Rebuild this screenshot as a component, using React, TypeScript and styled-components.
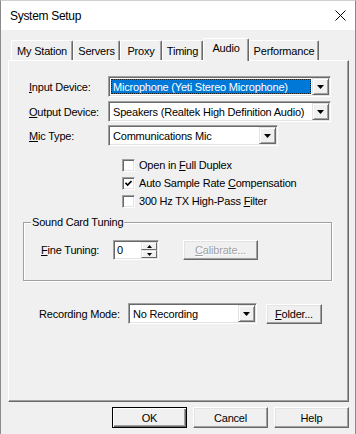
import React from 'react';
import styled, { createGlobalStyle } from 'styled-components';

const Global = createGlobalStyle`
  html, body { margin: 0; padding: 0; background: #f0f0f0; }
  body {
    font-family: "Liberation Sans", Arial, sans-serif;
    font-size: 11px;
    letter-spacing: -0.2px;
    color: #000;
  }
  * { box-sizing: border-box; }
`;

const Window = styled.div`
  width: 356px;
  height: 434px;
  background: #f0f0f0;
  border-left: 1px solid #8a8a8a;
  border-top: 1px solid #cfcfcf;
  border-right: 1px solid #8a8a8a;
  display: flex;
  flex-direction: column;
  overflow: hidden;
`;

const TitleBar = styled.div`
  height: 29px;
  flex-shrink: 0;
  background: #fff;
  display: flex;
  align-items: center;
  justify-content: space-between;
  padding: 0 9px 0 9px;
`;

const Title = styled.span`
  font-size: 12px;
  letter-spacing: -0.3px;
  margin-top: 1px;
`;

const CloseIcon = () => (
  <svg width="11" height="11" viewBox="0 0 11 11">
    <path d="M0.5 0.5 L10.5 10.5 M10.5 0.5 L0.5 10.5" stroke="#000" strokeWidth="1" fill="none" />
  </svg>
);

const Body = styled.div`
  flex: 1;
  display: flex;
  flex-direction: column;
  padding: 8px 6px 0 7px;
`;

const TabStrip = styled.div`
  display: flex;
  align-items: flex-end;
  height: 22px;
  padding-left: 3px;
`;

const Tab = styled.div<{ $w: number; $active?: boolean }>`
  width: ${p => p.$w}px;
  height: ${p => (p.$active ? 23 : 20)}px;
  margin-bottom: ${p => (p.$active ? -1 : 0)}px;
  position: relative;
  z-index: ${p => (p.$active ? 1 : 0)};
  background: #f0f0f0;
  border-top: 1px solid #fff;
  border-left: 1px solid #fff;
  border-right: 1px solid #696969;
  box-shadow: inset -1px 0 #a0a0a0;
  border-radius: 2px 2px 0 0;
  display: flex;
  align-items: center;
  justify-content: center;
  padding-bottom: ${p => (p.$active ? 4 : 0)}px;
`;

const Panel = styled.div`
  height: 342px;
  border-top: 1px solid #fff;
  border-left: 1px solid #fff;
  border-right: 1px solid #696969;
  border-bottom: 1px solid #696969;
  box-shadow: inset -1px -1px #a0a0a0;
  padding-top: 15px;
  display: flex;
  flex-direction: column;
`;

const FieldRow = styled.div<{ $mt?: number; $ml?: number }>`
  display: flex;
  align-items: center;
  height: 21px;
  margin-top: ${p => p.$mt ?? 0}px;
  margin-left: ${p => p.$ml ?? 20}px;
`;

const FieldLabel = styled.span<{ $w: number }>`
  width: ${p => p.$w}px;
  flex-shrink: 0;
`;

const U = styled.span`
  text-decoration: underline;
  text-underline-offset: 1px;
`;

const Combo = styled.div<{ $w: number }>`
  width: ${p => p.$w}px;
  height: 21px;
  background: #fff;
  border: 1px solid;
  border-color: #a0a0a0 #fff #fff #a0a0a0;
  box-shadow: inset 1px 1px #696969, inset -1px -1px #e3e3e3;
  display: flex;
  align-items: stretch;
  padding: 1px;
`;

const ComboValue = styled.div<{ $selected?: boolean }>`
  flex: 1;
  display: flex;
  align-items: center;
  padding: 0 1px;
  margin: 1px;
  white-space: nowrap;
  overflow: hidden;
  background: ${p => (p.$selected ? '#0078d7' : 'transparent')};
  color: ${p => (p.$selected ? '#fff' : '#000')};
  border: 1px dotted ${p => (p.$selected ? '#202020' : 'transparent')};
`;

const ArrowButton = styled.div`
  width: 17px;
  flex-shrink: 0;
  background: #f0f0f0;
  border: 1px solid;
  border-color: #e3e3e3 #696969 #696969 #e3e3e3;
  box-shadow: inset 1px 1px #fff, inset -1px -1px #a0a0a0;
  display: flex;
  align-items: center;
  justify-content: center;
`;

const DownArrow = () => (
  <svg width="7" height="4" viewBox="0 0 7 4">
    <path d="M0 0 H7 L3.5 4 Z" fill="#000" />
  </svg>
);

const ComboBox = ({ w, value, selected }: { w: number; value: string; selected?: boolean }) => (
  <Combo $w={w}>
    <ComboValue $selected={selected}>{value}</ComboValue>
    <ArrowButton>
      <DownArrow />
    </ArrowButton>
  </Combo>
);

const CheckList = styled.div`
  display: flex;
  flex-direction: column;
  margin: 10px 0 0 113px;
`;

const CheckRow = styled.div`
  display: flex;
  align-items: center;
  height: 18px;
  gap: 4px;
`;

const Box = styled.span`
  width: 13px;
  height: 13px;
  flex-shrink: 0;
  background: #fff;
  border: 1px solid;
  border-color: #a0a0a0 #fff #fff #a0a0a0;
  box-shadow: inset 1px 1px #696969, inset -1px -1px #e3e3e3;
  display: flex;
  align-items: center;
  justify-content: center;
`;

const CheckMark = () => (
  <svg width="7" height="7" viewBox="0 0 7 7">
    <path d="M0.5 2.8 L2.6 5 L6.5 1" stroke="#000" strokeWidth="1.6" fill="none" />
  </svg>
);

const CheckBox = ({ checked, children }: { checked?: boolean; children: React.ReactNode }) => (
  <CheckRow>
    <Box>{checked && <CheckMark />}</Box>
    <span>{children}</span>
  </CheckRow>
);

const Group = styled.fieldset`
  margin: 6px 0 0 14px;
  width: 309px;
  min-width: 0;
  border: 1px solid #a0a0a0;
  box-shadow: 1px 1px 0 #fff, inset 1px 1px #fff;
  padding: 0 0 20px 0;
`;

const Legend = styled.legend`
  margin-left: 7px;
  padding: 0 1px;
  line-height: 13px;
  background: #f0f0f0;
`;

const TuneRow = styled.div`
  display: flex;
  align-items: center;
  height: 20px;
  margin: 11px 0 0 17px;
`;

const Spin = styled.div`
  width: 46px;
  height: 20px;
  background: #fff;
  border: 1px solid;
  border-color: #a0a0a0 #fff #fff #a0a0a0;
  box-shadow: inset 1px 1px #696969, inset -1px -1px #e3e3e3;
  display: flex;
  padding: 1px;
`;

const SpinValue = styled.div`
  flex: 1;
  display: flex;
  align-items: center;
  padding-left: 2px;
`;

const SpinButtons = styled.div`
  width: 16px;
  display: flex;
  flex-direction: column;
`;

const SpinButton = styled.div`
  flex: 1;
  background: #f0f0f0;
  border: 1px solid;
  border-color: #e3e3e3 #696969 #696969 #e3e3e3;
  box-shadow: inset 1px 1px #fff;
  display: flex;
  align-items: center;
  justify-content: center;
`;

const TinyArrow = ({ up }: { up?: boolean }) => (
  <svg width="5" height="3" viewBox="0 0 5 3">
    <path d={up ? 'M0 3 H5 L2.5 0 Z' : 'M0 0 H5 L2.5 3 Z'} fill="#000" />
  </svg>
);

const PushButton = styled.div<{ $w: number; $h?: number; $default?: boolean; $disabled?: boolean; $ml?: number }>`
  width: ${p => p.$w}px;
  height: ${p => p.$h ?? 20}px;
  margin-left: ${p => p.$ml ?? 0}px;
  flex-shrink: 0;
  background: #f0f0f0;
  border: 1px solid;
  border-color: ${p => (p.$default ? '#000' : '#fff #696969 #696969 #fff')};
  box-shadow: ${p =>
    p.$default
      ? 'inset 1px 1px #fff, inset -1px -1px #696969, inset -2px -2px #a0a0a0'
      : 'inset -1px -1px #a0a0a0, inset 1px 1px #e3e3e3'};
  display: flex;
  align-items: center;
  justify-content: center;
  color: ${p => (p.$disabled ? '#a0a0a0' : '#000')};
  text-shadow: ${p => (p.$disabled ? '1px 1px 0 #fff' : 'none')};
`;

const Footer = styled.div`
  display: flex;
  justify-content: flex-end;
  gap: 6px;
  margin-top: 5px;
`;

export default function App() {
  return (
    <>
      <Global />
      <Window>
        <TitleBar>
          <Title>System Setup</Title>
          <CloseIcon />
        </TitleBar>
        <Body>
          <TabStrip>
            <Tab $w={62}>My Station</Tab>
            <Tab $w={47}>Servers</Tab>
            <Tab $w={42}>Proxy</Tab>
            <Tab $w={41}>Timing</Tab>
            <Tab $w={46} $active>Audio</Tab>
            <Tab $w={70}>Performance</Tab>
          </TabStrip>
          <Panel>
            <FieldRow>
              <FieldLabel $w={79}><U>I</U>nput Device:</FieldLabel>
              <ComboBox w={223} value="Microphone (Yeti Stereo Microphone)" selected />
            </FieldRow>
            <FieldRow $mt={4}>
              <FieldLabel $w={79}><U>O</U>utput Device:</FieldLabel>
              <ComboBox w={223} value="Speakers (Realtek High Definition Audio)" />
            </FieldRow>
            <FieldRow $mt={3}>
              <FieldLabel $w={79}><U>M</U>ic Type:</FieldLabel>
              <ComboBox w={170} value="Communications Mic" />
            </FieldRow>
            <CheckList>
              <CheckBox>Open in <U>F</U>ull Duplex</CheckBox>
              <CheckBox checked>Auto Sample Rate <U>C</U>ompensation</CheckBox>
              <CheckBox>300 Hz TX High-Pass <U>F</U>ilter</CheckBox>
            </CheckList>
            <Group>
              <Legend>Sound Card Tuning</Legend>
              <TuneRow>
                <FieldLabel $w={72}><U>F</U>ine Tuning:</FieldLabel>
                <Spin>
                  <SpinValue>0</SpinValue>
                  <SpinButtons>
                    <SpinButton><TinyArrow up /></SpinButton>
                    <SpinButton><TinyArrow /></SpinButton>
                  </SpinButtons>
                </Spin>
                <PushButton $w={75} $ml={24} $disabled><U>C</U>alibrate...</PushButton>
              </TuneRow>
            </Group>
            <FieldRow $mt={22} $ml={30}>
              <FieldLabel $w={89}>Recording Mode:</FieldLabel>
              <ComboBox w={129} value="No Recording" />
              <PushButton $w={56} $ml={9}><U>F</U>older...</PushButton>
            </FieldRow>
          </Panel>
          <Footer>
            <PushButton $w={75} $h={21} $default>OK</PushButton>
            <PushButton $w={75} $h={21}>Cancel</PushButton>
            <PushButton $w={75} $h={21}>Help</PushButton>
          </Footer>
        </Body>
      </Window>
    </>
  );
}
